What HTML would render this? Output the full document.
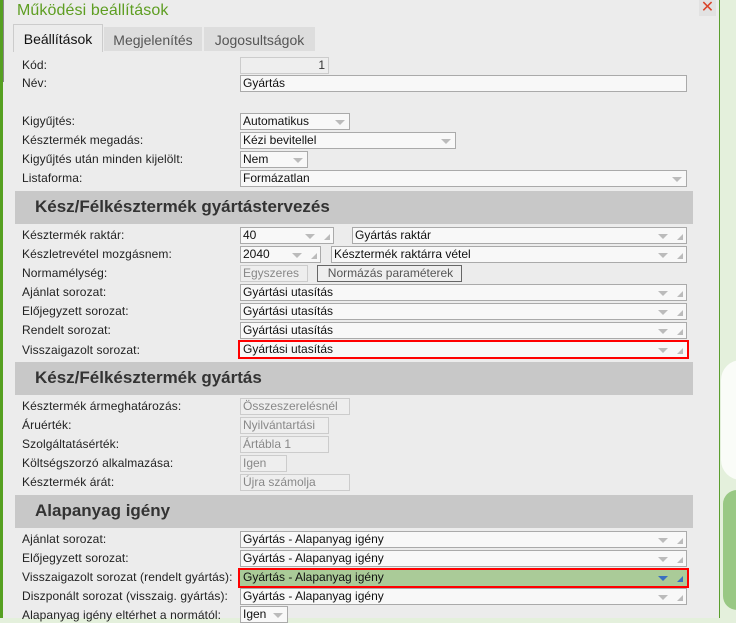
<!DOCTYPE html><html><head><meta charset="utf-8"><style>
*{margin:0;padding:0;box-sizing:border-box}
body{width:736px;height:618px;overflow:hidden;background:#e4f0dc;font-family:"Liberation Sans",sans-serif;position:relative}
.dlg{position:absolute;left:0;top:0;width:720px;height:618px;background:#ececec;border-right:1px solid #5a9e2e}
.lb{position:absolute;left:0;top:0;width:3px;height:618px;background:#56a022}
.lb2{position:absolute;left:3px;top:0;width:1px;height:82px;background:#888}
.t{position:absolute;font-size:12px;color:#222;white-space:nowrap;line-height:14px;letter-spacing:0.1px}
.i{position:absolute;height:17px;border:1px solid #aaa;background:#f8f8f8;font-size:12px;line-height:15px;padding-left:2px;color:#111;white-space:nowrap;overflow:hidden}
.d{border-color:#ccc;background:#eee;color:#888}
.h{position:absolute;left:15px;width:678px;height:33px;background:#c8c8c8;font-weight:bold;font-size:17px;color:#333;padding-left:20px;line-height:32px}
.a{position:absolute;right:18px;top:6px;width:0;height:0;border-left:5px solid transparent;border-right:5px solid transparent;border-top:5px solid #bbb}
.c{position:absolute;right:3px;top:6px;width:0;height:0;border-left:6px solid transparent;border-bottom:6px solid #bbb}
.red{border:2px solid #f00}
.tab{position:absolute;top:27px;height:24px;background:#ddd;font-size:14px;color:#555;line-height:26px;text-align:center}
</style></head><body>
<div class="dlg"></div>
<div class="lb"></div><div class="lb2"></div>
<div class="t" style="left:17px;top:1px;font-size:16px;line-height:20px;color:#5e9e22">Működési beállítások</div>
<div style="position:absolute;left:699px;top:0;width:17px;height:16px;background:#e2e2e2;color:#d9442a;font-size:16px;line-height:15px;text-align:center">✕</div>
<div class="tab" style="left:13px;top:24px;height:28px;width:90px;background:#ececec;border:1px solid #ccc;border-bottom:none;color:#111;line-height:28px">Beállítások</div>
<div class="tab" style="left:104px;width:98px">Megjelenítés</div>
<div class="tab" style="left:204px;width:111px">Jogosultságok</div>

<div class="t" style="left:22px;top:58px">Kód:</div><div class="i d" style="left:240px;top:57px;width:89px;text-align:right;padding-right:3px;color:#333">1</div>
<div class="t" style="left:22px;top:76px">Név:</div><div class="i" style="left:240px;top:75px;width:447px">Gyártás</div>
<div class="t" style="left:22px;top:114px">Kigyűjtés:</div><div class="i" style="left:240px;top:113px;width:110px">Automatikus<span class="a" style="right:4px"></span></div>
<div class="t" style="left:22px;top:133px">Késztermék megadás:</div><div class="i" style="left:240px;top:132px;width:216px">Kézi bevitellel<span class="a" style="right:4px"></span></div>
<div class="t" style="left:22px;top:152px">Kigyűjtés után minden kijelölt:</div><div class="i" style="left:240px;top:151px;width:68px">Nem<span class="a" style="right:4px"></span></div>
<div class="t" style="left:22px;top:171px">Listaforma:</div><div class="i" style="left:240px;top:170px;width:447px">Formázatlan<span class="a" style="right:4px"></span></div>

<div class="h" style="top:191px">Kész/Félkésztermék gyártástervezés</div>
<div class="t" style="left:22px;top:228px">Késztermék raktár:</div><div class="i" style="left:240px;top:227px;width:94px">40<span class="a"></span><span class="c"></span></div><div class="i" style="left:352px;top:227px;width:335px">Gyártás raktár<span class="a"></span><span class="c"></span></div>
<div class="t" style="left:22px;top:247px">Készletrevétel mozgásnem:</div><div class="i" style="left:240px;top:246px;width:81px">2040<span class="a"></span><span class="c"></span></div><div class="i" style="left:331px;top:246px;width:356px">Késztermék raktárra vétel<span class="a"></span><span class="c"></span></div>
<div class="t" style="left:22px;top:266px">Normamélység:</div><div class="i d" style="left:240px;top:265px;width:68px">Egyszeres</div><div class="i" style="left:317px;top:265px;width:145px;border-color:#666;background:#eee;color:#555;text-align:center">Normázás paraméterek</div>
<div class="t" style="left:22px;top:285px">Ajánlat sorozat:</div><div class="i" style="left:240px;top:284px;width:447px">Gyártási utasítás<span class="a"></span><span class="c"></span></div>
<div class="t" style="left:22px;top:304px">Előjegyzett sorozat:</div><div class="i" style="left:240px;top:303px;width:447px">Gyártási utasítás<span class="a"></span><span class="c"></span></div>
<div class="t" style="left:22px;top:323px">Rendelt sorozat:</div><div class="i" style="left:240px;top:322px;width:447px">Gyártási utasítás<span class="a"></span><span class="c"></span></div>
<div class="t" style="left:22px;top:343px">Visszaigazolt sorozat:</div><div class="i red" style="left:238px;top:340px;width:451px;height:19px;padding-left:3px">Gyártási utasítás<span class="a" style="right:19px"></span><span class="c" style="right:4px"></span></div>

<div class="h" style="top:362px">Kész/Félkésztermék gyártás</div>
<div class="t" style="left:22px;top:399px">Késztermék ármeghatározás:</div><div class="i d" style="left:240px;top:398px;width:110px">Összeszerelésnél</div>
<div class="t" style="left:22px;top:418px">Áruérték:</div><div class="i d" style="left:240px;top:417px;width:89px">Nyilvántartási</div>
<div class="t" style="left:22px;top:437px">Szolgáltatásérték:</div><div class="i d" style="left:240px;top:436px;width:89px">Ártábla 1</div>
<div class="t" style="left:22px;top:456px">Költségszorzó alkalmazása:</div><div class="i d" style="left:240px;top:455px;width:47px">Igen</div>
<div class="t" style="left:22px;top:475px">Késztermék árát:</div><div class="i d" style="left:240px;top:474px;width:110px">Újra számolja</div>

<div class="h" style="top:495px">Alapanyag igény</div>
<div class="t" style="left:22px;top:532px">Ajánlat sorozat:</div><div class="i" style="left:240px;top:531px;width:447px">Gyártás - Alapanyag igény<span class="a"></span><span class="c"></span></div>
<div class="t" style="left:22px;top:551px">Előjegyzett sorozat:</div><div class="i" style="left:240px;top:550px;width:447px">Gyártás - Alapanyag igény<span class="a"></span><span class="c"></span></div>
<div class="t" style="left:22px;top:570px">Visszaigazolt sorozat (rendelt gyártás):</div><div class="i red" style="left:238px;top:568px;width:451px;height:20px;background:#aacb98;padding-left:3px">Gyártás - Alapanyag igény<span class="a" style="right:19px;border-top-color:#3a6fc0"></span><span class="c" style="right:4px;border-bottom-color:#3a6fc0"></span></div>
<div class="t" style="left:22px;top:589px">Diszponált sorozat (visszaig. gyártás):</div><div class="i" style="left:240px;top:588px;width:447px">Gyártás - Alapanyag igény<span class="a"></span><span class="c"></span></div>
<div class="t" style="left:22px;top:608px">Alapanyag igény eltérhet a normától:</div><div class="i" style="left:240px;top:606px;width:48px">Igen<span class="a" style="right:4px"></span></div>
<div style="position:absolute;left:721px;top:360px;width:30px;height:120px;background:#fff;border-radius:20px 0 0 20px;opacity:.8"></div>
<div style="position:absolute;left:723px;top:490px;width:30px;height:120px;background:#99c884;border-radius:14px"></div>
</body></html>
